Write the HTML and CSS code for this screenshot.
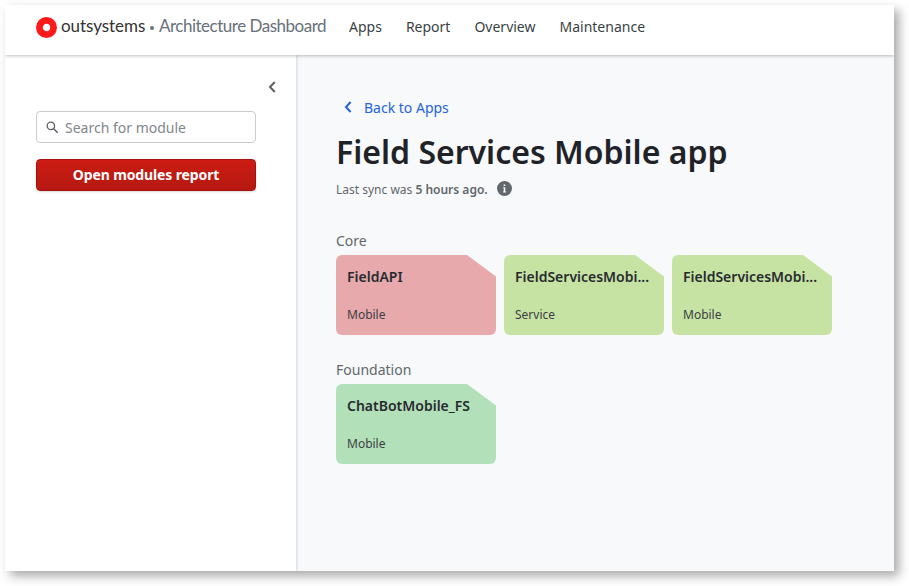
FILE: index.html
```html
<!DOCTYPE html>
<html lang="en">
<head>
<meta charset="utf-8">
<title>Architecture Dashboard</title>
<link rel="stylesheet" href="styles.css">
</head>
<body>
<div class="window">
  <header class="topbar">
    <div class="brand">
      <svg class="brand-mark" viewBox="0 0 21 21"><circle cx="10.5" cy="10.5" r="7.1" fill="#fff" stroke="#fe1a1a" stroke-width="6.8"/></svg>
      <span class="brand-name">outsystems</span>
      <span class="brand-dot"></span>
      <span class="brand-product">Architecture Dashboard</span>
    </div>
    <nav class="nav"><a>Apps</a><a>Report</a><a>Overview</a><a>Maintenance</a></nav>
  </header>
  <div class="body">
    <aside class="sidebar">
      <svg class="collapse" viewBox="0 0 8 12"><path d="M6.8 1 2 6l4.800 5" fill="none" stroke="#5b6167" stroke-width="2"/></svg>
      <div class="search">
        <svg class="search-icon" viewBox="0 0 13 13"><circle cx="4.900" cy="4.900" r="3.700" fill="none" stroke="#5b6167" stroke-width="1.300"/><path d="m7.700 7.700 4 4" stroke="#5b6167" stroke-width="1.600"/></svg>
        <span class="search-text">Search for module</span>
      </div>
      <button class="report-button">Open modules report</button>
    </aside>
    <main class="main">
      <a class="back"><svg class="back-icon" viewBox="0 0 8 12"><path d="M6.600 1 2 6l4.600 5" fill="none" stroke="#2463dc" stroke-width="2"/></svg>Back to Apps</a>
      <h1 class="title">Field Services Mobile app</h1>
      <div class="sync"><span class="sync-text">Last sync was <b>5 hours ago.</b></span>
        <svg class="info" viewBox="0 0 15 15"><circle cx="7.500" cy="7.500" r="7.500" fill="#62676c"/><path d="M6.600 3.500h1.700v1.500H6.600zM6.200 6.300h2.100v4.200h.7v1H6v-1h.7V7.300h-.5z" fill="#f7f9fb"/></svg>
      </div>
      <section class="layer">
        <h2 class="layer-name">Core</h2>
        <div class="cards">
          <article class="card card-red"><h3>FieldAPI</h3><p>Mobile</p></article>
          <article class="card card-lime"><h3>FieldServicesMobi...</h3><p>Service</p></article>
          <article class="card card-lime"><h3>FieldServicesMobi...</h3><p>Mobile</p></article>
        </div>
      </section>
      <section class="layer">
        <h2 class="layer-name">Foundation</h2>
        <div class="cards">
          <article class="card card-green"><h3>ChatBotMobile_FS</h3><p>Mobile</p></article>
        </div>
      </section>
    </main>
  </div>
</div>
</body>
</html>
```
FILE: styles.css
```css
* { box-sizing: border-box; }
body { margin: 0; padding: 5px; height: 586px; background: #fff; font: 14px/20px "Noto Sans", sans-serif; color: #272b30; overflow: hidden; }
h1, h2, h3, p { margin: 0; }
svg { display: block; flex: none; }
.window { width: 889px; height: 566px; display: flex; flex-direction: column; background: #fff; box-shadow: 5px 5px 10px rgba(0, 0, 0, .34); }
.topbar { height: 50px; flex: none; display: flex; padding-left: 31px; position: relative; z-index: 2; background: #fff; box-shadow: 0 1px 3px rgba(0, 0, 0, .26); clip-path: inset(0 0 -6px 0); }
.brand { width: 313px; height: 44px; display: flex; align-items: center; font: 17px/22px Lato, sans-serif; white-space: nowrap; }
.brand-mark { width: 21px; height: 21px; margin-right: 4px; }
.brand-name { width: 84px; color: #333; letter-spacing: -.05px; }
.brand-dot { width: 4px; height: 4px; margin: 1px 5px 0 5px; border-radius: 50%; background: #6c737b; flex: none; }
.brand-name, .brand-product { position: relative; top: -1px; }
.brand-product { color: #68707a; letter-spacing: -.49px; }
.nav { display: flex; gap: 24px; padding-top: 12px; color: #3a3f44; }
.body { flex: 1; display: flex; min-height: 0; }
.sidebar { width: 291px; padding: 26px 40px 0 31px; box-shadow: 1px 0 3px rgba(0, 0, 0, .14); clip-path: inset(0 -6px 0 0); display: flex; flex-direction: column; z-index: 1; }
.collapse { width: 8px; height: 12px; align-self: flex-end; margin-right: -20px; }
.search { height: 32px; margin-top: 18px; border: 1px solid #c9cdd2; border-radius: 4px; display: flex; align-items: center; padding-left: 9px; color: #81868c; }
.search-icon { width: 13px; height: 13px; margin: 0 6px 0 0; }
.search-text { padding-top: 2px; }
.report-button { height: 32px; margin-top: 16px; padding: 0; border: 1px solid #a81010; border-radius: 4px; background: linear-gradient(#cb1b12, #b61912); box-shadow: 0 1px 2px rgba(0, 0, 0, .15); color: #fff; font: bold 14px/20px "Noto Sans", sans-serif; letter-spacing: -.12px; }
.main { flex: 1; padding: 43px 0 0 40px; background: #f7f9fb; }
.back { display: flex; align-items: center; height: 20px; color: #2463dc; }
.back-icon { width: 8px; height: 12px; margin: 0 12px 2px 8px; }
.title { margin-top: 14px; font-size: 32px; line-height: 40px; font-weight: 600; color: #1f2328; white-space: nowrap; }
.sync { display: flex; align-items: center; height: 20px; margin-top: 7px; font-size: 12px; color: #62676c; }
.sync-text { padding-top: 2px; }
.sync b { font-weight: 600; }
.info { width: 15px; height: 15px; margin: 0 0 1px 9px; }
.layer { margin-top: 32px; }
.layer + .layer { margin-top: 25px; }
.layer-name { font-size: 14px; line-height: 20px; font-weight: 400; color: #62676c; }
.cards { display: flex; gap: 8px; margin-top: 4px; }
.card { width: 160px; height: 80px; padding: 12px 11px 0; border-radius: 6px; clip-path: polygon(0 0, 131px 0, 100% 21.500px, 100% 100%, 0 100%); }
.card h3 { font-size: 14px; line-height: 20px; font-weight: 600; white-space: nowrap; }
.card p { margin-top: 19px; font-size: 12px; line-height: 18px; color: #3a3f44; }
.card-red { background: #e8a9ac; }
.card-lime { background: #c7e3a3; }
.card-green { background: #b2e0b9; }
```
